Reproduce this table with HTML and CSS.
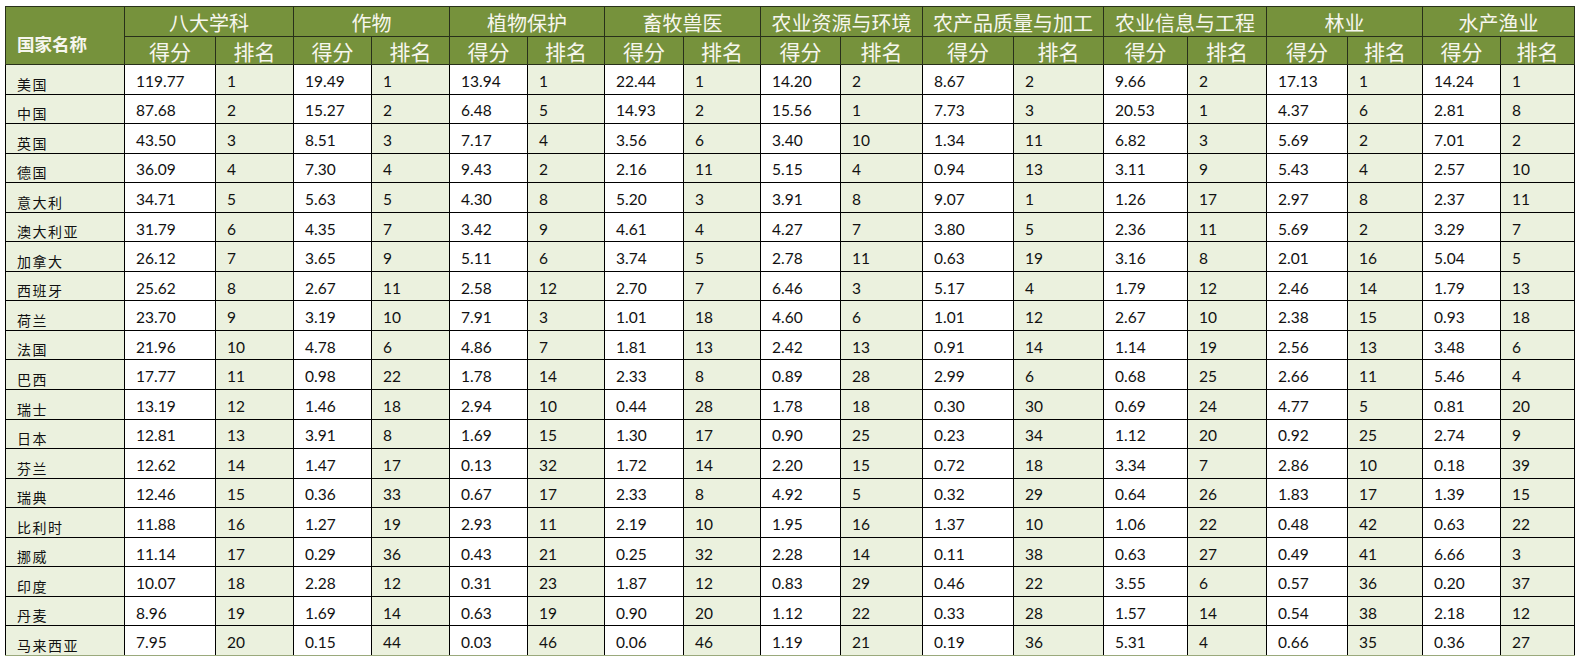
FILE: index.html
```html
<!DOCTYPE html>
<html lang="zh">
<head>
<meta charset="utf-8">
<title>农业学科排名</title>
<link rel="stylesheet" href="styles.css">
</head>
<body>
<table class="grid">
<colgroup>
<col style="width:119px"><col style="width:91px"><col style="width:78px"><col style="width:78px"><col style="width:78px"><col style="width:78px"><col style="width:77px"><col style="width:79px"><col style="width:77px"><col style="width:80px"><col style="width:82px"><col style="width:91px"><col style="width:90px"><col style="width:84px"><col style="width:79px"><col style="width:81px"><col style="width:75px"><col style="width:78px"><col style="width:74px">
</colgroup>
<thead>
<tr class="h1">
<th class="corner" rowspan="2">国家名称</th>
<th colspan="2">八大学科</th><th colspan="2">作物</th><th colspan="2">植物保护</th><th colspan="2">畜牧兽医</th><th colspan="2">农业资源与环境</th><th colspan="2">农产品质量与加工</th><th colspan="2">农业信息与工程</th><th colspan="2">林业</th><th colspan="2">水产渔业</th>
</tr>
<tr class="h2">
<th>得分</th><th>排名</th><th>得分</th><th>排名</th><th>得分</th><th>排名</th><th>得分</th><th>排名</th><th>得分</th><th>排名</th><th>得分</th><th>排名</th><th>得分</th><th>排名</th><th>得分</th><th>排名</th><th>得分</th><th>排名</th>
</tr>
</thead>
<tbody>
<tr><td>美国</td><td>119.77</td><td>1</td><td>19.49</td><td>1</td><td>13.94</td><td>1</td><td>22.44</td><td>1</td><td>14.20</td><td>2</td><td>8.67</td><td>2</td><td>9.66</td><td>2</td><td>17.13</td><td>1</td><td>14.24</td><td>1</td></tr>
<tr><td>中国</td><td>87.68</td><td>2</td><td>15.27</td><td>2</td><td>6.48</td><td>5</td><td>14.93</td><td>2</td><td>15.56</td><td>1</td><td>7.73</td><td>3</td><td>20.53</td><td>1</td><td>4.37</td><td>6</td><td>2.81</td><td>8</td></tr>
<tr><td>英国</td><td>43.50</td><td>3</td><td>8.51</td><td>3</td><td>7.17</td><td>4</td><td>3.56</td><td>6</td><td>3.40</td><td>10</td><td>1.34</td><td>11</td><td>6.82</td><td>3</td><td>5.69</td><td>2</td><td>7.01</td><td>2</td></tr>
<tr><td>德国</td><td>36.09</td><td>4</td><td>7.30</td><td>4</td><td>9.43</td><td>2</td><td>2.16</td><td>11</td><td>5.15</td><td>4</td><td>0.94</td><td>13</td><td>3.11</td><td>9</td><td>5.43</td><td>4</td><td>2.57</td><td>10</td></tr>
<tr><td>意大利</td><td>34.71</td><td>5</td><td>5.63</td><td>5</td><td>4.30</td><td>8</td><td>5.20</td><td>3</td><td>3.91</td><td>8</td><td>9.07</td><td>1</td><td>1.26</td><td>17</td><td>2.97</td><td>8</td><td>2.37</td><td>11</td></tr>
<tr><td>澳大利亚</td><td>31.79</td><td>6</td><td>4.35</td><td>7</td><td>3.42</td><td>9</td><td>4.61</td><td>4</td><td>4.27</td><td>7</td><td>3.80</td><td>5</td><td>2.36</td><td>11</td><td>5.69</td><td>2</td><td>3.29</td><td>7</td></tr>
<tr><td>加拿大</td><td>26.12</td><td>7</td><td>3.65</td><td>9</td><td>5.11</td><td>6</td><td>3.74</td><td>5</td><td>2.78</td><td>11</td><td>0.63</td><td>19</td><td>3.16</td><td>8</td><td>2.01</td><td>16</td><td>5.04</td><td>5</td></tr>
<tr><td>西班牙</td><td>25.62</td><td>8</td><td>2.67</td><td>11</td><td>2.58</td><td>12</td><td>2.70</td><td>7</td><td>6.46</td><td>3</td><td>5.17</td><td>4</td><td>1.79</td><td>12</td><td>2.46</td><td>14</td><td>1.79</td><td>13</td></tr>
<tr><td>荷兰</td><td>23.70</td><td>9</td><td>3.19</td><td>10</td><td>7.91</td><td>3</td><td>1.01</td><td>18</td><td>4.60</td><td>6</td><td>1.01</td><td>12</td><td>2.67</td><td>10</td><td>2.38</td><td>15</td><td>0.93</td><td>18</td></tr>
<tr><td>法国</td><td>21.96</td><td>10</td><td>4.78</td><td>6</td><td>4.86</td><td>7</td><td>1.81</td><td>13</td><td>2.42</td><td>13</td><td>0.91</td><td>14</td><td>1.14</td><td>19</td><td>2.56</td><td>13</td><td>3.48</td><td>6</td></tr>
<tr><td>巴西</td><td>17.77</td><td>11</td><td>0.98</td><td>22</td><td>1.78</td><td>14</td><td>2.33</td><td>8</td><td>0.89</td><td>28</td><td>2.99</td><td>6</td><td>0.68</td><td>25</td><td>2.66</td><td>11</td><td>5.46</td><td>4</td></tr>
<tr><td>瑞士</td><td>13.19</td><td>12</td><td>1.46</td><td>18</td><td>2.94</td><td>10</td><td>0.44</td><td>28</td><td>1.78</td><td>18</td><td>0.30</td><td>30</td><td>0.69</td><td>24</td><td>4.77</td><td>5</td><td>0.81</td><td>20</td></tr>
<tr><td>日本</td><td>12.81</td><td>13</td><td>3.91</td><td>8</td><td>1.69</td><td>15</td><td>1.30</td><td>17</td><td>0.90</td><td>25</td><td>0.23</td><td>34</td><td>1.12</td><td>20</td><td>0.92</td><td>25</td><td>2.74</td><td>9</td></tr>
<tr><td>芬兰</td><td>12.62</td><td>14</td><td>1.47</td><td>17</td><td>0.13</td><td>32</td><td>1.72</td><td>14</td><td>2.20</td><td>15</td><td>0.72</td><td>18</td><td>3.34</td><td>7</td><td>2.86</td><td>10</td><td>0.18</td><td>39</td></tr>
<tr><td>瑞典</td><td>12.46</td><td>15</td><td>0.36</td><td>33</td><td>0.67</td><td>17</td><td>2.33</td><td>8</td><td>4.92</td><td>5</td><td>0.32</td><td>29</td><td>0.64</td><td>26</td><td>1.83</td><td>17</td><td>1.39</td><td>15</td></tr>
<tr><td>比利时</td><td>11.88</td><td>16</td><td>1.27</td><td>19</td><td>2.93</td><td>11</td><td>2.19</td><td>10</td><td>1.95</td><td>16</td><td>1.37</td><td>10</td><td>1.06</td><td>22</td><td>0.48</td><td>42</td><td>0.63</td><td>22</td></tr>
<tr><td>挪威</td><td>11.14</td><td>17</td><td>0.29</td><td>36</td><td>0.43</td><td>21</td><td>0.25</td><td>32</td><td>2.28</td><td>14</td><td>0.11</td><td>38</td><td>0.63</td><td>27</td><td>0.49</td><td>41</td><td>6.66</td><td>3</td></tr>
<tr><td>印度</td><td>10.07</td><td>18</td><td>2.28</td><td>12</td><td>0.31</td><td>23</td><td>1.87</td><td>12</td><td>0.83</td><td>29</td><td>0.46</td><td>22</td><td>3.55</td><td>6</td><td>0.57</td><td>36</td><td>0.20</td><td>37</td></tr>
<tr><td>丹麦</td><td>8.96</td><td>19</td><td>1.69</td><td>14</td><td>0.63</td><td>19</td><td>0.90</td><td>20</td><td>1.12</td><td>22</td><td>0.33</td><td>28</td><td>1.57</td><td>14</td><td>0.54</td><td>38</td><td>2.18</td><td>12</td></tr>
<tr><td>马来西亚</td><td>7.95</td><td>20</td><td>0.15</td><td>44</td><td>0.03</td><td>46</td><td>0.06</td><td>46</td><td>1.19</td><td>21</td><td>0.19</td><td>36</td><td>5.31</td><td>4</td><td>0.66</td><td>35</td><td>0.36</td><td>27</td></tr>
</tbody>
</table>
</body>
</html>
```

FILE: styles.css
```css
html, body {
  margin: 0;
  padding: 0;
  background: #ffffff;
}

.grid {
  border-collapse: collapse;
  table-layout: fixed;
  width: 1570px;
  margin: 6px 0 0 5px;
  font-family: Lato, "Noto Sans CJK SC", sans-serif;
  color: #111;
}

.grid th {
  background: #76923c;
  color: #f6f6ee;
  font-family: "Noto Sans CJK SC", sans-serif;
  font-weight: normal;
  border: 1px solid #28301a;
  padding: 0;
  white-space: nowrap;
  overflow: hidden;
}

.h1 {
  height: 30px;
}

.h2 {
  height: 28px;
}

.h1 th {
  font-size: 20px;
  line-height: 24px;
  vertical-align: middle;
  padding-top: 2px;
}

.h2 th {
  font-size: 21px;
  line-height: 24px;
  vertical-align: bottom;
  padding-bottom: 1px;
}

.grid th.corner {
  font-size: 17.5px;
  font-weight: bold;
  line-height: 20px;
  text-align: left;
  vertical-align: bottom;
  padding: 0 0 10px 11px;
}

.grid tbody tr {
  height: 29.55px;
}

.grid td {
  border: 1px solid #000;
  padding: 3px 0 0 11px;
  font-size: 15.5px;
  line-height: 18px;
  vertical-align: middle;
  white-space: nowrap;
  overflow: hidden;
  background: #ffffff;
}

.grid td:nth-child(odd) {
  background: #ebf1de;
}

.grid td:first-child {
  font-family: "Noto Sans CJK SC", sans-serif;
  font-size: 14px;
  letter-spacing: 1.5px;
  vertical-align: bottom;
  padding: 0 0 1px 11px;
}

.grid tbody tr:last-child td {
  border-bottom-color: #9aa97c;
}
```
